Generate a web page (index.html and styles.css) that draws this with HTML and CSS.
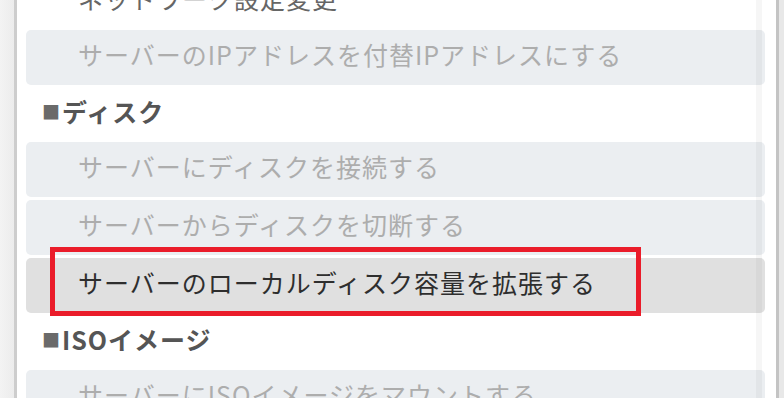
FILE: index.html
```html
<!DOCTYPE html>
<html lang="ja">
<head>
    <meta charset="UTF-8">
    <meta name="viewport" content="width=device-width, initial-scale=1.0">
    <title>操作メニュー</title>
    <link rel="stylesheet" href="styles.css">
</head>
<body>

  <div class="panel">
    <div class="scroll-band"></div>
    <ul class="menu-list">
      <li class="menu-item first">ネットワーク設定変更</li>
      <li class="menu-item disabled">サーバーのIPアドレスを付替IPアドレスにする</li>
      <li class="menu-heading"><span class="mark">■</span>ディスク</li>
      <li class="menu-item disabled">サーバーにディスクを接続する</li>
      <li class="menu-item disabled">サーバーからディスクを切断する</li>
      <li class="menu-item selected">
        サーバーのローカルディスク容量を拡張する
        <span class="highlight-box"></span>
      </li>
      <li class="menu-heading"><span class="mark">■</span>ISOイメージ</li>
      <li class="menu-item disabled">サーバーにISOイメージをマウントする</li>
    </ul>
  </div>

</body>
</html>
```

FILE: styles.css
```css
body {
  margin: 0;
  height: 398px;
  overflow: hidden;
  background: linear-gradient(to right, #f3f3f3 0px, #ececec 14px, #e8e8e8 779px);
  font-family: "Noto Sans CJK JP", "Noto Sans", sans-serif;
}

.panel {
  position: relative;
  margin-left: 14px;
  width: 759px;
  height: 398px;
  background-color: white;
  border-left: 3px solid #cdcdcd;
  border-right: 3px solid #c4c4c4;
  overflow: hidden;
}

/* faint scrollbar track of the inner list */
.scroll-band {
  position: absolute;
  top: 0;
  right: 14px;
  width: 6px;
  height: 100%;
  background-color: rgba(0, 0, 0, 0.035);
  z-index: 2;
}

.menu-list {
  list-style: none;
  margin: -20px 0 0 0;
  padding: 0 11px 0 9px;
  display: flex;
  flex-direction: column;
  gap: 3px;
}

.menu-item {
  position: relative;
  height: 55px;
  box-sizing: border-box;
  padding-left: 52px;
  padding-bottom: 7px;
  display: flex;
  align-items: center;
  font-size: 25px;
  letter-spacing: 1px;
  color: #666;
  border-radius: 5px;
  white-space: nowrap;
}

.menu-item.first {
  height: 47px;
  padding-bottom: 12px;
}

.menu-item.disabled {
  background-color: #ebeef1;
  color: #adadad;
}

.menu-item.selected {
  background-color: #e0e0e0;
  color: #2e2e2e;
}

.highlight-box {
  position: absolute;
  top: -11px;
  left: 24px;
  width: 591px;
  height: 69px;
  box-sizing: border-box;
  border: 5px solid #ea1c2a;
}

.menu-heading {
  height: 51px;
  box-sizing: border-box;
  padding-bottom: 5px;
  display: flex;
  align-items: center;
  padding-left: 18px;
  font-size: 25px;
  font-weight: bold;
  letter-spacing: 1px;
  color: #555;
}

.mark {
  font-size: 18px;
  color: #6a6a6a;
  letter-spacing: 0;
  margin-left: -2px;
  margin-right: 2px;
}
```
